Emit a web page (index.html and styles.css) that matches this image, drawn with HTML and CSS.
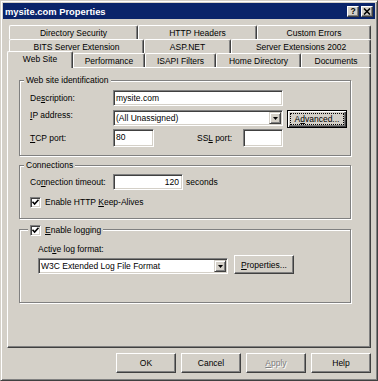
FILE: index.html
```html
<!DOCTYPE html>
<html>
<head>
<meta charset="utf-8">
<title>mysite.com Properties</title>
<link rel="stylesheet" href="styles.css">
</head>
<body>
<div class="window">
  <div class="titlebar">
    <span class="title">mysite.com Properties</span>
    <div class="caps">
      <span class="cbtn help">?</span>
      <span class="cbtn close"><svg width="8" height="7" viewBox="0 0 8 7"><path d="M1 0.5 L7 6.5 M7 0.5 L1 6.5" stroke="#000" stroke-width="1.6" fill="none"/></svg></span>
    </div>
  </div>
  <div class="client">
    <div class="tabs">
      <div class="tabrow r1">
        <div class="tab t-dirsec">Directory Security</div>
        <div class="tab t-http">HTTP Headers</div>
        <div class="tab t-errors">Custom Errors</div>
      </div>
      <div class="tabrow r2">
        <div class="tab t-bits">BITS Server Extension</div>
        <div class="tab t-asp">ASP.NET</div>
        <div class="tab t-ext">Server Extensions 2002</div>
      </div>
      <div class="tabrow r3">
        <div class="tab active t-web">Web Site</div>
        <div class="tab t-perf">Performance</div>
        <div class="tab t-isapi">ISAPI Filters</div>
        <div class="tab t-home">Home Directory</div>
        <div class="tab t-docs">Documents</div>
      </div>
    </div>
    <div class="panel">
      <div class="group g1">
        <div class="legend">Web site identification</div>
        <div class="row r-desc">
          <span class="label">De<u>s</u>cription:</span>
          <div class="input w-wide">mysite.com</div>
        </div>
        <div class="row r-ip">
          <span class="label"><u>I</u>P address:</span>
          <div class="input select w-wide"><span class="seltext">(All Unassigned)</span><span class="drop"><svg width="5" height="3" viewBox="0 0 5 3"><path d="M0 0 H5 L2.5 3 Z" fill="#000"/></svg></span></div>
          <div class="btn default adv">A<u>d</u>vanced...</div>
        </div>
        <div class="row r-port">
          <span class="label"><u>T</u>CP port:</span>
          <div class="input port tcp">80</div>
          <span class="ssl-label">SS<u>L</u> port:</span>
          <div class="input port ssl"></div>
        </div>
      </div>
      <div class="group g2">
        <div class="legend">Connections</div>
        <div class="row r-timeout">
          <span class="label">Co<u>n</u>nection timeout:</span>
          <div class="input timeout">120</div>
          <span class="unit">seconds</span>
        </div>
        <div class="row r-keep">
          <span class="check"><svg width="9" height="9" viewBox="0 0 9 9"><path d="M1.5 3.8 L3.6 6 L7.5 1.8" stroke="#000" stroke-width="1.6" fill="none"/></svg></span>
          <span class="checktext">Enable HTTP <u>K</u>eep-Alives</span>
        </div>
      </div>
      <div class="group g3">
        <div class="legend legend-check">
          <span class="check"><svg width="9" height="9" viewBox="0 0 9 9"><path d="M1.5 3.8 L3.6 6 L7.5 1.8" stroke="#000" stroke-width="1.6" fill="none"/></svg></span>
          <span class="checktext"><u>E</u>nable logging</span>
        </div>
        <div class="sublabel">Acti<u>v</u>e log format:</div>
        <div class="row r-log">
          <div class="input select w-log"><span class="seltext">W3C Extended Log File Format</span><span class="drop"><svg width="5" height="3" viewBox="0 0 5 3"><path d="M0 0 H5 L2.5 3 Z" fill="#000"/></svg></span></div>
          <div class="btn props"><u>P</u>roperties...</div>
        </div>
      </div>
    </div>
    <div class="buttons">
      <div class="btn dlg">OK</div>
      <div class="btn dlg">Cancel</div>
      <div class="btn dlg disabled"><u>A</u>pply</div>
      <div class="btn dlg">Help</div>
    </div>
  </div>
</div>
</body>
</html>
```

FILE: styles.css
```css
* { box-sizing: border-box; }
html, body { margin: 0; padding: 0; }
body {
  background: #D4D0C8;
  font-family: "Liberation Sans", Arial, sans-serif;
  font-size: 8.5px;
  color: #000;
}
u { text-decoration: underline; text-underline-offset: 1px; }

.window {
  width: 378px;
  height: 381px;
  background: #D4D0C8;
  border: 1px solid;
  border-color: #D4D0C8 #404040 #404040 #D4D0C8;
  box-shadow: inset 1px 1px #fff, inset -1px -1px #808080;
  padding: 2px;
}

.titlebar {
  height: 16px;
  background: #0A246A;
  display: flex;
  align-items: center;
  justify-content: space-between;
  padding: 0 2px 0 2px;
}
.title {
  color: #fff;
  font-weight: bold;
  font-size: 9.4px;
  white-space: nowrap;
}
.caps { display: flex; gap: 2px; }
.cbtn {
  width: 12px;
  height: 11px;
  background: #D4D0C8;
  border: 1px solid;
  border-color: #fff #404040 #404040 #fff;
  box-shadow: inset -1px -1px #808080;
  display: flex;
  align-items: center;
  justify-content: center;
}
.help { font-weight: bold; font-size: 8.5px; line-height: 1; }

.client { padding: 6px 4px 0 4px; }

.tabrow { display: flex; height: 14px; }
.tabrow.r1, .tabrow.r2 { padding-left: 2px; }
.tab {
  flex: none;
  height: 14px;
  border-top: 1px solid #fff;
  border-left: 1px solid #fff;
  border-right: 1px solid #404040;
  box-shadow: inset -1px 0 #808080;
  border-radius: 2px 2px 0 0;
  text-align: center;
  line-height: 14px;
  white-space: nowrap;
  background: #D4D0C8;
}
.tab.active {
  height: 17px;
  margin-top: -2px;
  position: relative;
  z-index: 1;
  line-height: 15px;
}
.t-dirsec { width: 129px; }
.t-http { width: 119px; }
.t-errors { width: 114px; }
.t-bits { width: 135px; }
.t-asp { width: 87px; }
.t-ext { width: 140px; }
.t-web { width: 66px; }
.t-perf { width: 72px; }
.t-isapi { width: 71px; }
.t-home { width: 85px; }
.t-docs { width: 70px; }

.panel {
  width: 364px;
  height: 281px;
  border: 1px solid;
  border-color: #fff #404040 #404040 #fff;
  box-shadow: inset -1px -1px #808080;
  padding-top: 12px;
}

.group {
  margin-left: 11px;
  width: 332px;
  border: 1px solid #808080;
  box-shadow: inset 1px 1px #fff, 1px 1px #fff;
  padding: 0 0 8px 10px;
}
.g2 { margin-top: 9px; padding-bottom: 10px; }
.g3 { margin-top: 10px; padding-bottom: 28px; }

.legend {
  width: fit-content;
  height: 11px;
  line-height: 11px;
  margin: -6px 0 0 -6px;
  padding: 0 2px;
  background: #D4D0C8;
  white-space: nowrap;
}
.legend-check {
  display: flex;
  align-items: center;
  height: 12px;
  margin-left: -2px;
}

.row { display: flex; align-items: center; }
.label { width: 83px; flex: none; white-space: nowrap; }

.input {
  flex: none;
  height: 16px;
  background: #fff;
  border: 1px solid;
  border-color: #808080 #fff #fff #808080;
  box-shadow: inset 1px 1px #404040, inset -1px -1px #D4D0C8;
  padding: 0 3px 0 2px;
  line-height: 14px;
  white-space: nowrap;
}
.w-wide { width: 170px; }

.select {
  display: flex;
  align-items: center;
  justify-content: space-between;
  padding: 1px;
}
.seltext { padding-left: 1px; }
.drop {
  width: 12px;
  height: 12px;
  background: #D4D0C8;
  border: 1px solid;
  border-color: #D4D0C8 #404040 #404040 #D4D0C8;
  box-shadow: inset 1px 1px #fff, inset -1px -1px #808080;
  display: flex;
  align-items: center;
  justify-content: center;
}

.r-desc { margin-top: 4px; height: 16px; }
.r-ip { margin-top: 4px; height: 17px; align-items: flex-start; }
.r-port { margin-top: 2px; height: 18px; }
.port { height: 18px; width: 41px; }
.tcp { width: 41px; }
.ssl-label { margin-left: 43px; width: 46px; white-space: nowrap; }
.ssl { width: 40px; }

.btn {
  flex: none;
  width: 60px;
  background: #D4D0C8;
  border: 1px solid;
  border-color: #fff #404040 #404040 #fff;
  box-shadow: inset -1px -1px #808080;
  display: flex;
  align-items: center;
  justify-content: center;
  white-space: nowrap;
}
.adv {
  margin-left: 4px;
  height: 18px;
  border-color: #000;
  box-shadow: inset 1px 1px #fff, inset -1px -1px #404040, inset -2px -2px #808080;
  outline: 1px dotted #000;
  outline-offset: -4px;
}

.r-timeout { margin-top: 3px; height: 16px; }
.timeout { width: 70px; text-align: right; }
.unit { margin-left: 3px; }
.r-keep { margin-top: 6px; height: 12px; }
.check {
  flex: none;
  width: 11px;
  height: 11px;
  background: #fff;
  border: 1px solid;
  border-color: #808080 #fff #fff #808080;
  box-shadow: inset 1px 1px #404040, inset -1px -1px #D4D0C8;
  display: flex;
  align-items: center;
  justify-content: center;
}
.checktext { margin-left: 4px; white-space: nowrap; }

.sublabel {
  margin: 8px 0 0 8px;
  height: 11px;
  line-height: 11px;
}
.r-log { margin-left: 8px; height: 19px; align-items: flex-end; }
.w-log { width: 190px; }
.props { margin-left: 6px; height: 19px; }

.buttons {
  display: flex;
  justify-content: flex-end;
  gap: 5px;
  margin-top: 5px;
}
.dlg { height: 20px; }
.disabled { color: #808080; text-shadow: 1px 1px #fff; }
```
